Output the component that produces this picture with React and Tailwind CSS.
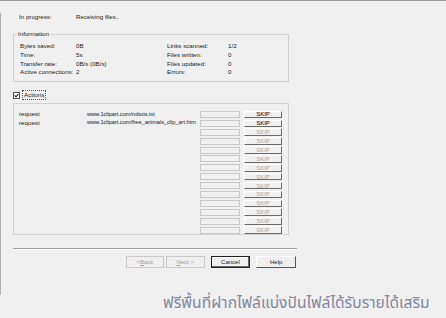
import React from "react";

const font = { fontFamily: '"Liberation Sans", Arial, sans-serif' };

function InfoRow({ a, b, c, d }) {
  return (
    <div className="flex h-[8.7px] items-center leading-none">
      <div className="w-[56px]">{a}</div>
      <div className="w-[91px]">{b}</div>
      <div className="w-[61px]">{c}</div>
      <div>{d}</div>
    </div>
  );
}

function ActionRow({ left, url, enabled }) {
  return (
    <div className="flex h-[8.9px] items-center leading-none">
      <div className="w-[68px]">{left}</div>
      <div className="w-[113px] whitespace-nowrap text-[5.7px] tracking-[-0.05px]">{url}</div>
      <div className="w-[40px] h-[7px] border border-[#c8c8c8] bg-[#f0f0f0]" />
      <div
        className={
          "ml-[4px] w-[38px] h-[7.5px] flex items-center justify-center text-[6px] border-t border-l border-t-white border-l-white border-b border-r border-b-[#696969] border-r-[#696969] " +
          (enabled ? "text-black" : "text-[#a8a8a8]")
        }
      >
        SKIP
      </div>
    </div>
  );
}

export default function App() {
  const rows = [
    { left: "request", url: "www.1clipart.com/robots.txt", enabled: true },
    { left: "request", url: "www.1clipart.com/free_animals_clip_art.htm", enabled: true },
  ];
  for (let i = 0; i < 12; i++) rows.push({ left: "", url: "", enabled: false });

  return (
    <div
      className="w-[446px] h-[318px] bg-[#f0f0f0] border-t border-[#9a9a9a] text-[6.2px] text-[#1a1a1a] overflow-hidden"
      style={font}
    >
      <div className="w-[300px] border-l border-[#b0b0b0] h-[282px] pl-[12px] pr-[4px]">
        <div className="flex h-[9px] items-center mt-[12px] pl-[6px] leading-none">
          <div className="w-[57px]">In progress:</div>
          <div>Receiving files..</div>
        </div>

        <div className="mt-[12px] w-[276px] h-[48px] border border-[#d0d0d0] relative pt-[7px] pl-[6px]">
          <div className="absolute left-[3px] top-[-4px] px-[1px] bg-[#f0f0f0] leading-none">Information</div>
          <InfoRow a="Bytes saved:" b="0B" c="Links scanned:" d="1/2" />
          <InfoRow a="Time:" b="5s" c="Files written:" d="0" />
          <InfoRow a="Transfer rate:" b="0B/s (0B/s)" c="Files updated:" d="0" />
          <InfoRow a="Active connections:" b="2" c="Errors:" d="0" />
        </div>

        <div className="mt-[8px] flex items-center h-[10px]">
          <div className="w-[7px] h-[7px] border border-[#555] bg-white flex items-center justify-center">
            <svg width="5" height="5" viewBox="0 0 5 5">
              <path d="M0.6 2.4 L2 3.8 L4.4 1" stroke="#111" strokeWidth="1.1" fill="none" />
            </svg>
          </div>
          <div className="ml-[2px] px-[1px] h-[10px] flex items-center border border-dotted border-[#555] leading-none">Actions</div>
        </div>

        <div className="mt-[3px] w-[276px] h-[132px] border border-[#d0d0d0] pt-[6px] pl-[5px]">
          {rows.map((r, i) => (
            <ActionRow key={i} {...r} />
          ))}
        </div>

        <div className="mt-[13px] w-[284px] h-[2px] border-t border-[#a0a0a0] border-b border-b-white" />

        <div className="mt-[6px] flex pl-[113px] h-[12px]">
          <div className="w-[38px] h-[12px] flex items-center justify-center border border-[#c8c8c8] text-[#a0a0a0] text-[6px]">
            &lt; <span className="underline">B</span>ack
          </div>
          <div className="ml-[2px] w-[39px] h-[12px] flex items-center justify-center border border-[#c8c8c8] text-[#a0a0a0] text-[6px]">
            <span className="underline">N</span>ext &gt;
          </div>
          <div className="ml-[6px] w-[40px] h-[12px] flex items-center justify-center border border-[#222] text-[6px] shadow-[inset_-1px_-1px_0_#696969,inset_1px_1px_0_#fff]">
            Cancel
          </div>
          <div className="ml-[6px] w-[40px] h-[12px] flex items-center justify-center text-[6px] border-t border-l border-t-white border-l-white border-b border-r border-b-[#555] border-r-[#555]">
            Help
          </div>
        </div>
      </div>

      <div className="pl-[163px] mt-[1px] text-[15.6px] leading-none text-[#8486a0]" style={{ fontFamily: '"Noto Sans Thai", "Noto Sans", "DejaVu Sans", sans-serif' }}>
        ฟรีพื้นที่ฝากไฟล์แบ่งปันไฟล์ได้รับรายได้เสริม
      </div>
    </div>
  );
}
